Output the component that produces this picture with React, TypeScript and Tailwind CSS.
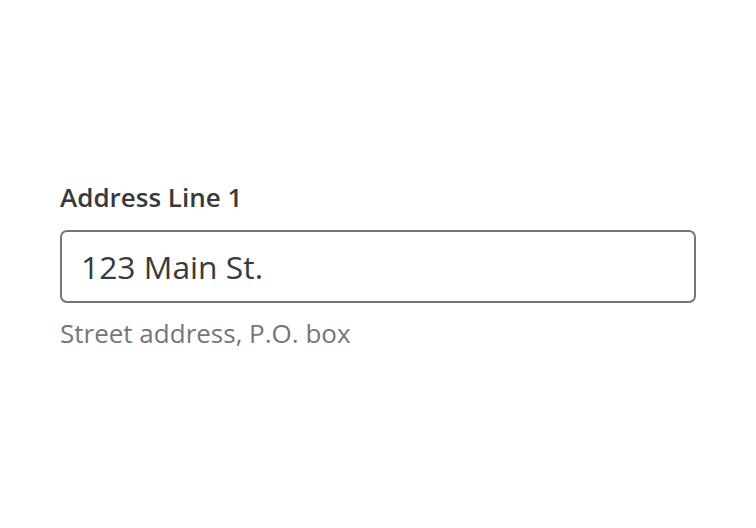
export default function App() {
  return (
    <div
      className="w-[756px] h-[528px] bg-white px-[60px] pt-[179px]"
      style={{ fontFamily: '"Open Sans", sans-serif' }}
    >
      <label htmlFor="addr1" className="block text-[26px] leading-[36px] font-semibold text-[#3a3a3a]">
        Address Line 1
      </label>
      <input
        id="addr1"
        type="text"
        defaultValue="123 Main St."
        className="mt-[15px] block w-[636px] h-[73px] rounded-[7px] border-2 border-[#767676] px-[19px] text-[31.8px] text-[#3a3a3a] outline-none"
        style={{ fontFamily: '"Open Sans", sans-serif' }}
      />
      <p className="mt-[12px] text-[26px] leading-[36px] text-[#767676]">Street address, P.O. box</p>
    </div>
  );
}
